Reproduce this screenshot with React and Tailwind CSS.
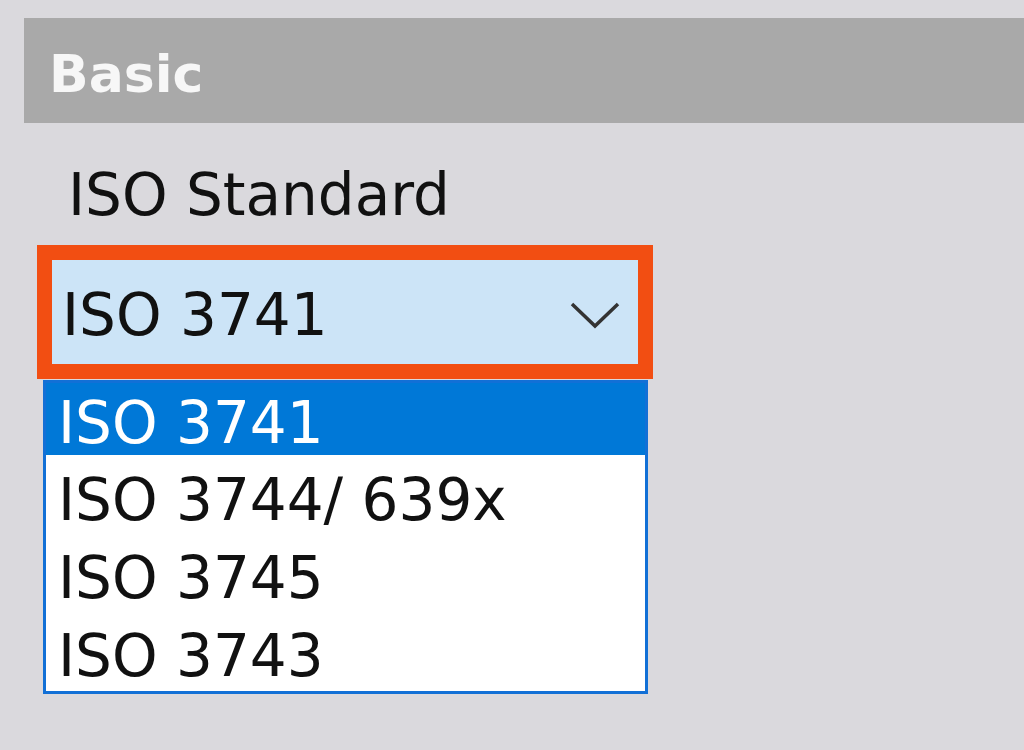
import React from 'react';

const OPTIONS = ['ISO 3741', 'ISO 3744/ 639x', 'ISO 3745', 'ISO 3743'];

function Chevron() {
  return (
    <svg width="50" height="28" viewBox="0 0 50 28" className="shrink-0">
      <polyline points="2,3 25,25 48,3" fill="none" stroke="#333" strokeWidth="3.5" />
    </svg>
  );
}

export default function App() {
  return (
    <div className="w-[1024px] h-[750px] overflow-hidden bg-[#dad9dd] pt-[18px] pl-[24px] font-['DejaVu_Sans',sans-serif]">
      <div className="h-[105px] bg-[#a9a9a9] pl-[25px] pt-[30px]">
        <div className="text-[52px] leading-none font-bold text-[#f7f7f7]">Basic</div>
      </div>

      <div className="ml-[44px] mt-[43px] text-[58px] leading-none text-[#111]">ISO Standard</div>

      <div className="ml-[13px] mt-[21px] w-[616px] h-[134px] border-[15px] border-[#f24e12] bg-[#cce4f7] flex items-center justify-between pl-[10px] pr-[18px] pt-[5px]">
        <span className="text-[58px] leading-none text-[#111]">ISO 3741</span>
        <Chevron />
      </div>

      <div className="ml-[19px] mt-[1px] w-[605px] border-[3px] border-[#1270d6] bg-white pb-[2px]">
        {OPTIONS.map((opt, i) => (
          <div
            key={opt}
            className={i === 0
              ? 'h-[72px] pt-[11px] pl-[12px] bg-[#0078d7] text-white text-[58px] leading-none'
              : 'h-[78px] pt-[16px] pl-[12px] text-[#111] text-[58px] leading-none'}
          >
            {opt}
          </div>
        ))}
      </div>
    </div>
  );
}
